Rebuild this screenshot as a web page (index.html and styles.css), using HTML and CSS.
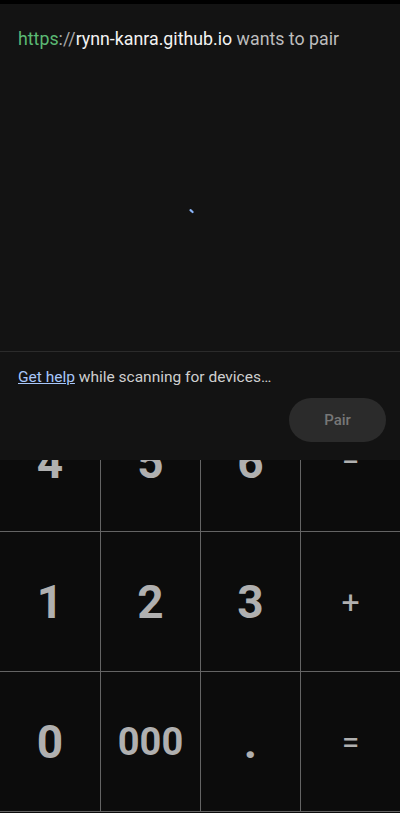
FILE: index.html
```html
<!DOCTYPE html>
<html>
<head>
<meta charset="utf-8">
<link rel="stylesheet" href="styles.css">
</head>
<body>
<div class="calc">
  <div class="display"></div>
  <div class="keys">
    <div class="key">C</div><div class="key">%</div><div class="key">⌫</div><div class="key op">÷</div>
    <div class="key">7</div><div class="key">8</div><div class="key">9</div><div class="key op">×</div>
    <div class="key">4</div><div class="key">5</div><div class="key">6</div><div class="key op">−</div>
    <div class="key">1</div><div class="key">2</div><div class="key">3</div><div class="key op">+</div>
    <div class="key">0</div><div class="key small">000</div><div class="key">.</div><div class="key op">=</div>
  </div>
</div>

<div class="dialog">
  <div class="statusbar"></div>
  <div class="header">
    <span class="scheme">https</span><span class="sep">://</span><span class="host">rynn-kanra.github.io</span><span class="rest"> wants to pair</span>
  </div>
  <div class="content">
    <svg class="spinner" width="16" height="16" viewBox="0 0 16 16">
      <path d="M2.5 4.2 L4.6 6" stroke="#8ab4f8" stroke-width="2.2" stroke-linecap="round" fill="none"/>
    </svg>
  </div>
  <div class="footer">
    <p class="status"><a class="help">Get help</a> while scanning for devices…</p>
    <div class="actions"><button class="pair">Pair</button></div>
  </div>
</div>
</body>
</html>
```
FILE: styles.css
```css
html, body {
  margin: 0;
  padding: 0;
}
body {
  width: 400px;
  height: 813px;
  background: #0c0c0c;
  font-family: Roboto, "Noto Sans", sans-serif;
  position: relative;
  overflow: hidden;
}
.calc {
  display: flex;
  flex-direction: column;
}
.display {
  height: 112px;
}
.keys {
  display: grid;
  grid-template-columns: repeat(4, 100px);
  grid-auto-rows: 140px;
}
.key {
  display: flex;
  align-items: center;
  justify-content: center;
  color: #b0b0b0;
  font-size: 46px;
  font-weight: 700;
  border-bottom: 1px solid #646464;
  border-left: 1px solid #646464;
  box-sizing: border-box;
}
.key:nth-child(4n+1) {
  border-left: none;
}
.key.small {
  font-size: 38px;
}
.key.op {
  font-size: 32px;
  font-weight: 400;
}
.dialog {
  position: absolute;
  top: 0;
  left: 0;
  width: 400px;
  height: 460px;
  background: #131313;
  display: flex;
  flex-direction: column;
}
.statusbar {
  height: 4px;
  background: #000;
}
.header {
  padding: 23px 18px 3px;
  font-size: 17.8px;
  line-height: 24px;
  color: #bdbdbd;
}
.scheme { color: #5bb974; }
.sep { color: #a8a8a8; }
.host { color: #f2f2f2; }
.rest { color: #bdbdbd; }
.content {
  flex: 1;
  position: relative;
  border-bottom: 1px solid #2b2b2b;
}
.spinner {
  position: absolute;
  left: 188px;
  top: 152px;
}
.footer {
  height: 108px;
  padding: 0 14px 0 18px;
  display: flex;
  flex-direction: column;
}
.status {
  margin: 15px 0 0;
  font-size: 15.5px;
  line-height: 20px;
  color: #cfcfcf;
}
.help {
  color: #a8c7fa;
  text-decoration: underline;
}
.actions {
  display: flex;
  justify-content: flex-end;
  margin-top: 11px;
}
.pair {
  width: 97px;
  height: 44px;
  border: none;
  border-radius: 22px;
  background: #2b2b2b;
  color: #777;
  font-family: Roboto, sans-serif;
  font-size: 15px;
  font-weight: 500;
}
```
